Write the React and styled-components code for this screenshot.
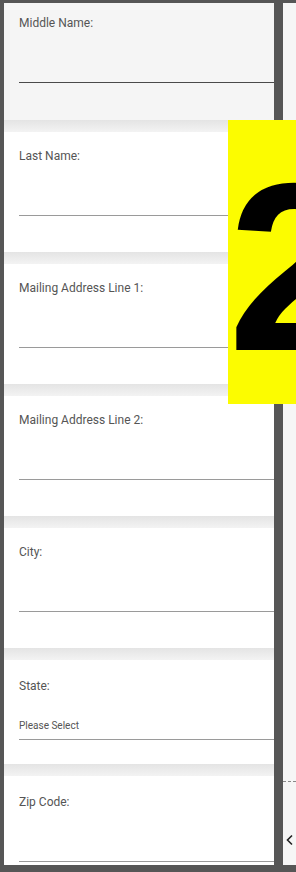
import styled, { createGlobalStyle } from 'styled-components';

const Global = createGlobalStyle`
  html, body {
    margin: 0;
    padding: 0;
    background: #565656;
  }
  body {
    font-family: Roboto, "Liberation Sans", sans-serif;
  }
`

const fields = [
  { label: 'Middle Name:', active: true },
  { label: 'Last Name:' },
  { label: 'Mailing Address Line 1:' },
  { label: 'Mailing Address Line 2:' },
  { label: 'City:' },
  { label: 'State:', select: true },
  { label: 'Zip Code:', last: true },
]

function App() {
  return (
    <Screen>
      <Global />
      <FormPanel>
        {fields.map((f, i) => (
          <div key={f.label}>
            <Card $active={f.active} $first={i === 0} $select={f.select} $last={f.last}>
              <Label>{f.label}</Label>
              {f.select ? (
                <SelectBox>Please Select</SelectBox>
              ) : (
                <InputLine $active={f.active} />
              )}
            </Card>
            {!f.last && <Divider />}
          </div>
        ))}
      </FormPanel>
      <SidePanel>
        <Dashes />
        <Chevron width="8" height="12" viewBox="0 0 8 12">
          <polyline points="6,1.5 1.5,6 6,10.5" fill="none" stroke="#222" strokeWidth="1.6" />
        </Chevron>
      </SidePanel>
      <StepBadge>
        <StepNumber>2</StepNumber>
      </StepBadge>
    </Screen>
  );
}

export default App;

const Screen = styled.div`
  position: relative;
  width: 296px;
  height: 872px;
  overflow: hidden;
  display: flex;
  gap: 9px;
  padding: 3px 0 7px 4px;
  box-sizing: border-box;
`

const FormPanel = styled.div`
  width: 270px;
  flex-shrink: 0;
  height: 862px;
  overflow: hidden;
  background: #fff;
`

const Card = styled.div`
  height: ${p => (p.$first ? '117px' : p.$select ? '104px' : '120px')};
  box-sizing: border-box;
  padding-top: ${p => (p.$first ? '13px' : p.$select ? '19px' : p.$last ? '19px' : '17px')};
  padding-left: 15px;
  background: ${p => (p.$active ? '#f5f5f5' : '#fff')};
`

const Label = styled.div`
  font-size: 12px;
  line-height: 14px;
  color: #555;
  height: 14px;
`

const InputLine = styled.div`
  height: 52px;
  border-bottom: ${p => (p.$active ? '1.5px solid #4a4a4a' : '1px solid #9a9a9a')};
`

const SelectBox = styled.div`
  margin-top: 27px;
  font-size: 10px;
  line-height: 12px;
  color: #555;
  padding-bottom: 7px;
  border-bottom: 1px solid #9a9a9a;
`

const Divider = styled.div`
  height: 12px;
  background: linear-gradient(#e4e4e4, #f3f3f3);
`

const SidePanel = styled.div`
  flex: 1;
  height: 862px;
  background: #f6f6f6;
  display: flex;
  flex-direction: column;
`

const Dashes = styled.div`
  margin-top: 778px;
  height: 0;
  border-top: 1px dashed #888;
`

const Chevron = styled.svg`
  margin-top: 52px;
  margin-left: 3px;
`

const StepBadge = styled.div`
  position: absolute;
  left: 228px;
  top: 120px;
  width: 68px;
  height: 284px;
  background: #fcfc00;
  overflow: hidden;
`

const StepNumber = styled.div`
  font-family: "Liberation Sans", Arial, sans-serif;
  font-weight: 700;
  font-size: 240px;
  line-height: 240px;
  color: #000;
  margin-top: 27px;
  margin-left: 0;
`
